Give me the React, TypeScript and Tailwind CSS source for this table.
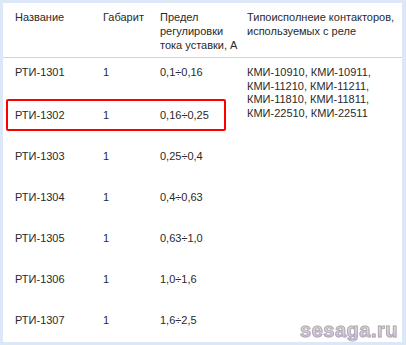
export default function App() {
  const rows = [
    ["РТИ-1301", "1", "0,1÷0,16"],
    ["РТИ-1302", "1", "0,16÷0,25"],
    ["РТИ-1303", "1", "0,25÷0,4"],
    ["РТИ-1304", "1", "0,4÷0,63"],
    ["РТИ-1305", "1", "0,63÷1,0"],
    ["РТИ-1306", "1", "1,0÷1,6"],
    ["РТИ-1307", "1", "1,6÷2,5"],
  ];

  return (
    <div className="w-[406px] h-[345px] bg-[#dce8f8] pt-[3px] pl-[3px] pr-[4px] pb-[3px] font-['Liberation_Sans',Arial,sans-serif] text-[11px] text-[#2a2a2a]">
      <div className="relative h-full bg-white overflow-hidden">
        {/* шапка */}
        <div className="grid grid-cols-[88px_57px_87px_1fr] pl-[12px] pt-[7px] pb-[5px] leading-[14px] border-b border-[#f6d46e]">
          <div>Название</div>
          <div>Габарит</div>
          <div>
            Предел
            <br />
            регулировки
            <br />
            тока уставки, А
          </div>
          <div>
            Типоисполнеие контакторов,
            <br />
            используемых с реле
          </div>
        </div>

        {/* строки */}
        <div className="grid grid-cols-[88px_57px_87px_1fr] grid-rows-[43px_41px_41px_41px_41px_41px_41px] pl-[12px] leading-[13.5px]">
          {rows.map((r, i) => (
            <div key={r[0]} className="contents">
              <div className="pt-[8px]">{r[0]}</div>
              <div className="pt-[8px]">{r[1]}</div>
              <div className="pt-[8px]">{r[2]}</div>
              <div className="pt-[8px] min-h-0">
                {i === 0 && (
                  <div className="whitespace-nowrap">
                    КМИ-10910, КМИ-10911,
                    <br />
                    КМИ-11210, КМИ-11211,
                    <br />
                    КМИ-11810, КМИ-11811,
                    <br />
                    КМИ-22510, КМИ-22511
                  </div>
                )}
              </div>
            </div>
          ))}
        </div>

        {/* выделение */}
        <div className="absolute left-[3px] top-[96px] w-[220px] h-[32px] border-2 border-[#ff0000] rounded-[2px]" />

        {/* водяной знак */}
        <div className="absolute right-[4px] bottom-[2px] text-[20px] font-bold leading-none tracking-[0.5px] bg-gradient-to-b from-[#f3e6a8] to-[#c4aef0] bg-clip-text text-transparent [-webkit-text-stroke:1px_#a8a4b0] opacity-90">
          sesaga.ru
        </div>
      </div>
    </div>
  );
}
